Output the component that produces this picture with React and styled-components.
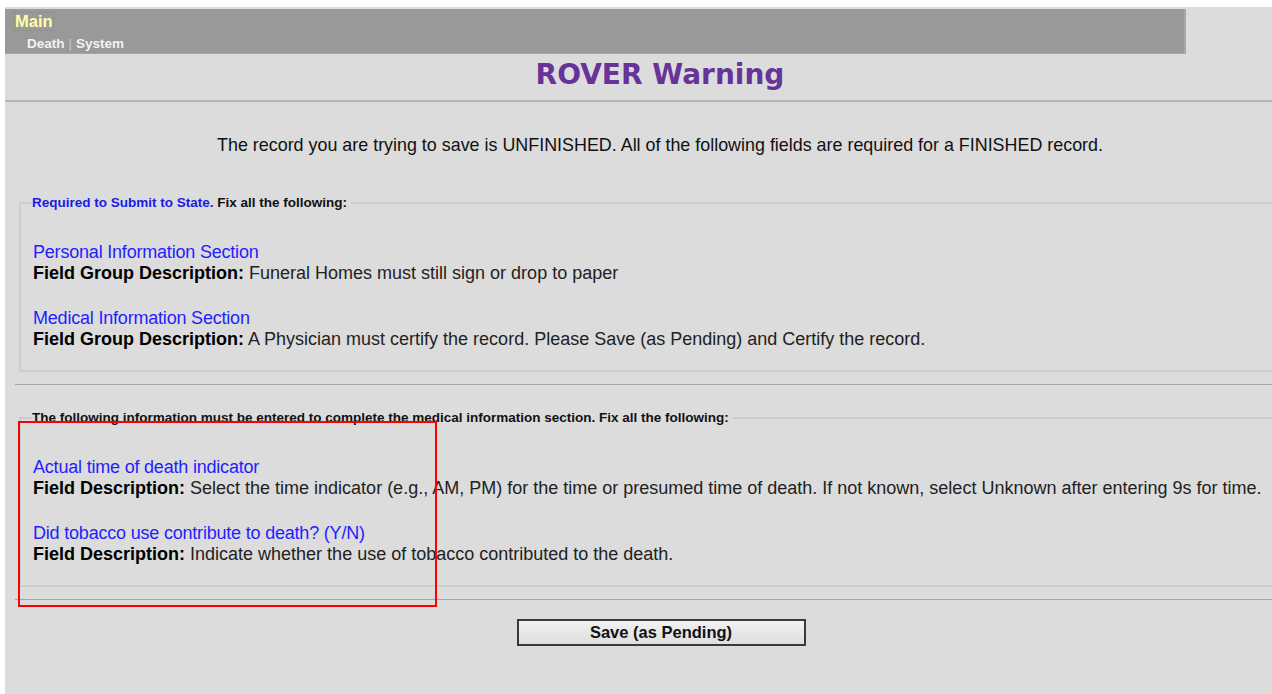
import React from 'react'
import styled, { createGlobalStyle } from 'styled-components'

const GlobalStyle = createGlobalStyle`
  html, body {
    margin: 0;
    padding: 0;
    background: #ffffff;
    overflow: hidden;
  }
  body {
    font-family: "Liberation Sans", Arial, sans-serif;
  }
`

const Page = styled.div`
  position: relative;
  width: 1310px;
  min-height: 700px;
  margin: 7px 0 0 5px;
  padding-top: 2px;
  background-color: #dcdcdc;
`

const NavBar = styled.div`
  width: 1179px;
  height: 44px;
  background-color: #999999;
  border-right: 2px solid #a8a8a8;
  border-bottom: 1px solid #a4a4a4;
  display: flex;
  flex-direction: column;
`

const MainLink = styled.a`
  align-self: flex-start;
  margin: 4px 0 0 10px;
  font-size: 16.5px;
  font-weight: bold;
  line-height: 17px;
  color: #ffffa8;
  text-decoration: none;
  outline: 1px dotted #8c8c6a;
`

const SubNav = styled.div`
  margin: 6px 0 0 22px;
  font-size: 13.5px;
  font-weight: bold;
  line-height: 15px;
  color: #f2f2f2;
`

const Sep = styled.span`
  color: #c8c8c8;
  font-weight: normal;
  margin: 0 4px;
`

const Title = styled.h1`
  margin: 0;
  height: 45px;
  padding-top: 1px;
  text-align: center;
  font-family: "DejaVu Sans", Verdana, sans-serif;
  font-size: 28px;
  font-weight: bold;
  line-height: 40px;
  color: #663399;
  border-bottom: 2px solid #b4b4b4;
`

const Notice = styled.p`
  margin: 33px 0 0;
  text-align: center;
  font-size: 17.9px;
  line-height: 20px;
  color: #111111;
`

const Group = styled.fieldset`
  margin: ${p => p.$top}px 0 0 14px;
  padding: ${p => p.$padTop}px 12px 20px 12px;
  border: 2px solid #cdcdcd;
  min-inline-size: auto;
`

const Legend = styled.legend`
  padding: 0 4px 0 0;
  margin-left: -1px;
  font-size: 13.5px;
  font-weight: bold;
  line-height: 14px;
  color: #111111;
`

const LegendLead = styled.span`
  color: #1a1ae6;
`

const Item = styled.div`
  & + & {
    margin-top: 24px;
  }
`

const FieldLink = styled.a`
  display: block;
  font-size: 18px;
  line-height: 21px;
  color: #1f1fff;
  text-decoration: none;
  letter-spacing: -0.2px;
`

const Desc = styled.div`
  font-size: 18px;
  line-height: 21px;
  color: #222222;
`

const Label = styled.b`
  color: #000000;
`

const Rule = styled.hr`
  margin: ${p => p.$top}px 0 0 10px;
  border: none;
  border-top: 1px solid #a6a6a6;
  height: 0;
`

const Actions = styled.div`
  display: flex;
  justify-content: center;
  padding-top: 19px;
`

const SaveButton = styled.button`
  width: 289px;
  height: 27px;
  margin-left: 2px;
  border: 2px solid #3a3a3a;
  background: linear-gradient(#f2f2f2, #dedede);
  font-family: "Liberation Sans", Arial, sans-serif;
  font-size: 16.5px;
  font-weight: bold;
  color: #111111;
  cursor: pointer;
`

const Highlight = styled.div`
  position: absolute;
  left: 13px;
  top: 414px;
  width: 415px;
  height: 182px;
  border: 2px solid #ff0000;
  pointer-events: none;
`

const required = [
  {
    name: 'Personal Information Section',
    desc: 'Funeral Homes must still sign or drop to paper',
  },
  {
    name: 'Medical Information Section',
    desc: 'A Physician must certify the record. Please Save (as Pending) and Certify the record.',
  },
]

const medical = [
  {
    name: 'Actual time of death indicator',
    desc: 'Select the time indicator (e.g., AM, PM) for the time or presumed time of death. If not known, select Unknown after entering 9s for time.',
  },
  {
    name: 'Did tobacco use contribute to death? (Y/N)',
    desc: 'Indicate whether the use of tobacco contributed to the death.',
  },
]

function App() {
  return (
    <>
      <GlobalStyle />
      <Page>
        <NavBar>
          <MainLink href="#">Main</MainLink>
          <SubNav>
            Death<Sep>|</Sep>System
          </SubNav>
        </NavBar>
        <Title>ROVER Warning</Title>
        <Notice>
          The record you are trying to save is UNFINISHED. All of the following fields are required for a FINISHED record.
        </Notice>

        <Group $top={41} $padTop={32}>
          <Legend>
            <LegendLead>Required to Submit to State.</LegendLead> Fix all the following:
          </Legend>
          {required.map(f => (
            <Item key={f.name}>
              <FieldLink href="#">{f.name}</FieldLink>
              <Desc><Label>Field Group Description:</Label> {f.desc}</Desc>
            </Item>
          ))}
        </Group>

        <Rule $top={12} />

        <Group $top={26} $padTop={32}>
          <Legend>
            The following information must be entered to complete the medical information section. Fix all the following:
          </Legend>
          {medical.map(f => (
            <Item key={f.name}>
              <FieldLink href="#">{f.name}</FieldLink>
              <Desc><Label>Field Description:</Label> {f.desc}</Desc>
            </Item>
          ))}
        </Group>

        <Rule $top={12} />

        <Actions>
          <SaveButton type="button">Save (as Pending)</SaveButton>
        </Actions>

        <Highlight />
      </Page>
    </>
  )
}

export default App
